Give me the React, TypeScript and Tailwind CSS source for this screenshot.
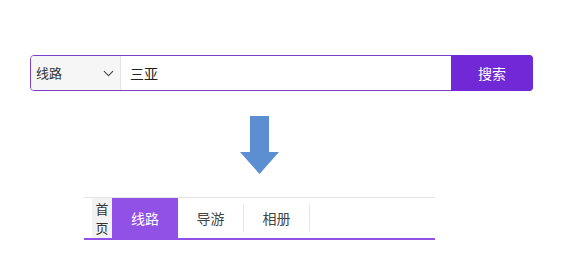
import { ChevronDown } from "lucide-react";

const font = { fontFamily: '"Noto Sans CJK SC", "Noto Sans", sans-serif' };

function SearchBar() {
  return (
    <div className="ml-[30px] flex h-[36px] w-[503px] rounded-[4px] border border-[#7b3fc9] bg-white">
      <div className="flex w-[90px] items-center justify-between rounded-l-[3px] border-r border-[#e2e2e2] bg-[#f6f6f6] pl-[5px] pr-[3px]">
        <span className="text-[13px] text-[#333]">线路</span>
        <ChevronDown className="h-[17px] w-[17px] text-[#444]" strokeWidth={1.5} />
      </div>
      <div className="flex flex-1 items-center pl-[9px] text-[14px] text-[#222]">三亚</div>
      <button className="-my-px -mr-px w-[82px] rounded-r-[4px] bg-[#7128d6] text-[14px] text-white">
        搜索
      </button>
    </div>
  );
}

function Arrow() {
  return (
    <div className="ml-[240px] mt-[25px] h-[59px] w-[39px]">
      <svg width="39" height="59" viewBox="0 0 39 59">
        <path d="M10 0 H29 V36 H39 L19.5 58 L0 36 H10 Z" fill="#5b8fd1" />
      </svg>
    </div>
  );
}

function Tabs() {
  return (
    <div className="ml-[84px] mt-[22px] flex h-[43px] w-[351px] border-t border-b-2 border-t-[#e4e4e4] border-b-[#9150e6] bg-white">
      <div className="ml-[8px] flex w-[20px] flex-col items-center justify-center bg-[#f2f2f2] text-[13px] leading-[19px] text-[#333]">
        <span>首</span>
        <span>页</span>
      </div>
      <div className="flex w-[66px] items-center justify-center bg-[#9150e6] text-[14px] text-white">线路</div>
      <div className="my-[6px] flex w-[66px] items-center justify-center border-r border-[#e6e6e6] text-[14px] text-[#444]">导游</div>
      <div className="my-[6px] flex w-[66px] items-center justify-center border-r border-[#e6e6e6] text-[14px] text-[#444]">相册</div>
    </div>
  );
}

export default function App() {
  return (
    <div className="h-[280px] w-[562px] bg-white pt-[55px]" style={font}>
      <SearchBar />
      <Arrow />
      <Tabs />
    </div>
  );
}
